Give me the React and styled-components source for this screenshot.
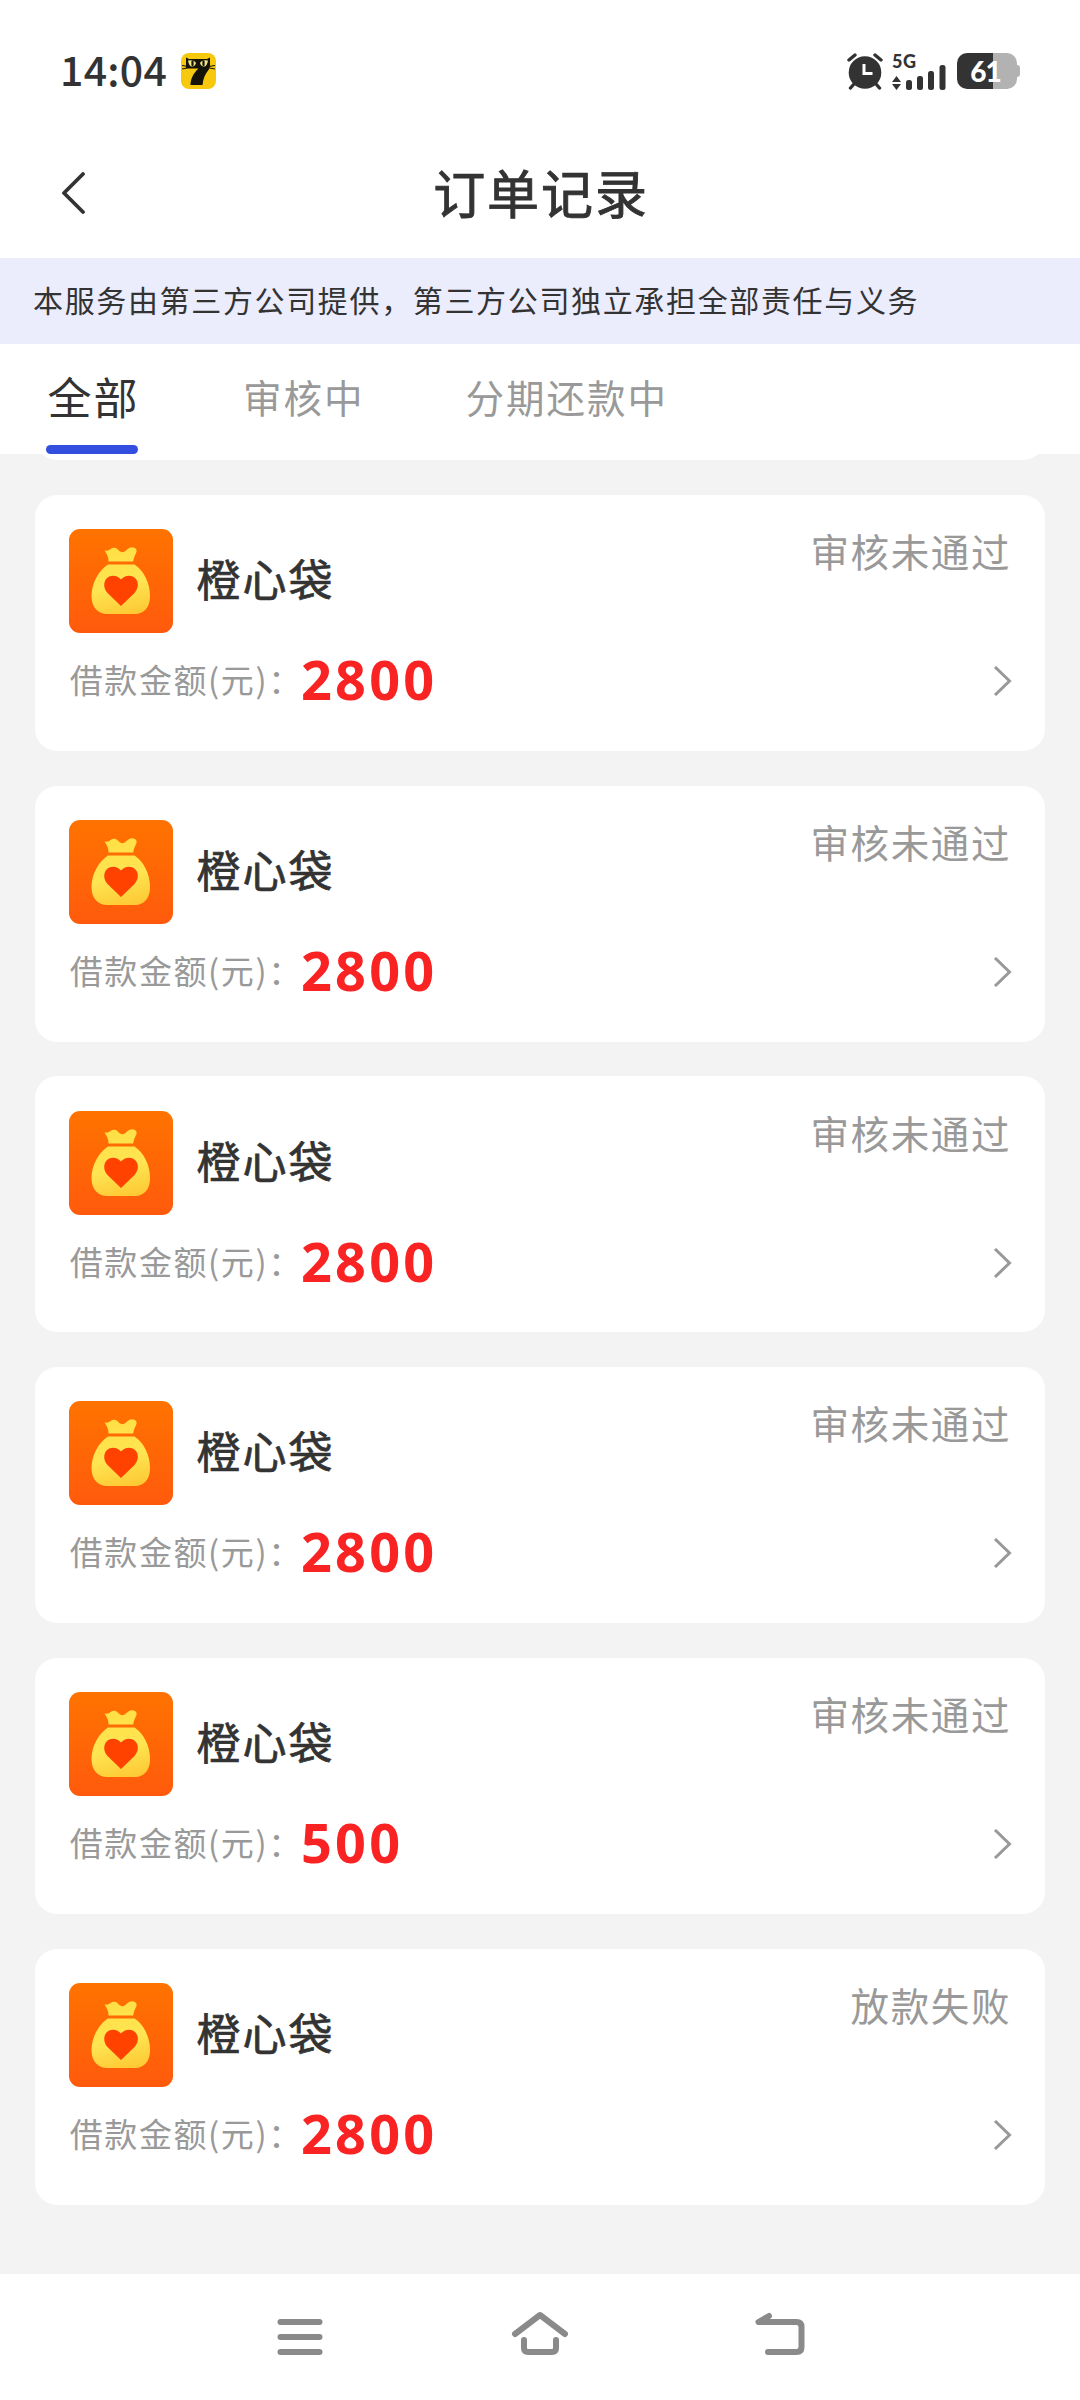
import React from "react";
import styled, { createGlobalStyle } from "styled-components";

const GlobalStyle = createGlobalStyle`
  * { box-sizing: border-box; }
  body {
    margin: 0;
    background: #f3f3f3;
    font-family: "Noto Sans CJK SC", "Noto Sans", sans-serif;
    color: #333;
  }
`;

const Screen = styled.div`
  width: 1080px;
  height: 2400px;
  display: flex;
  flex-direction: column;
  overflow: hidden;
  background: #f3f3f3;
`;

const StatusBar = styled.header`
  height: 140px;
  flex: none;
  display: flex;
  align-items: center;
  justify-content: space-between;
  padding: 2px 60px 0 60px;
  background: #fff;
`;

const StatusGroup = styled.div`
  display: flex;
  align-items: center;
`;

const Clock = styled.span`
  width: 121px;
  font-size: 41px;
  font-weight: 500;
  line-height: 55px;
  padding-bottom: 5px;
  letter-spacing: 0.3px;
`;

const Signal = styled.div`
  width: 54px;
  margin: 0 11px 0 9px;
  display: flex;
  flex-direction: column;
`;

const NetworkLabel = styled.span`
  font-family: Lato, sans-serif;
  font-size: 18px;
  font-weight: 900;
  line-height: 19px;
  height: 13px;
  letter-spacing: 0.6px;
`;

const Battery = styled.div`
  display: flex;
  align-items: center;
`;

const BatteryBody = styled.div`
  width: 60px;
  height: 36px;
  border-radius: 10px;
  background: linear-gradient(90deg, #333 60%, #b2b2b2 60%);
  color: #fff;
  font-family: Lato, sans-serif;
  font-size: 28px;
  font-weight: 900;
  line-height: 36px;
  text-align: center;
  padding-right: 3px;
  letter-spacing: -1px;
`;

const BatteryTip = styled.div`
  width: 3px;
  height: 12px;
  border-radius: 0 3px 3px 0;
  background: #b2b2b2;
`;

const TitleBar = styled.div`
  height: 118px;
  flex: none;
  display: grid;
  grid-template-columns: 120px 1fr 120px;
  align-items: center;
  background: #fff;
`;

const BackButton = styled.button`
  border: 0;
  background: none;
  padding: 0 0 12px 60px;
  height: 118px;
  display: flex;
  align-items: center;
`;

const Title = styled.h1`
  margin: 0;
  padding-bottom: 14px;
  padding-left: 2px;
  text-align: center;
  font-size: 52px;
  font-weight: 400;
  -webkit-text-stroke: 0.9px #333;
  line-height: 76px;
  letter-spacing: 1.9px;
`;

const Notice = styled.div`
  height: 86px;
  flex: none;
  padding-left: 33px;
  background: #ebecfc;
  font-size: 30px;
  line-height: 83px;
  letter-spacing: 1.65px;
`;

const Tabs = styled.nav`
  height: 110px;
  flex: none;
  display: flex;
  padding-left: 46px;
  background: #fff;
`;

const Tab = styled.div`
  display: flex;
  flex-direction: column;
  margin-right: ${(p) => p.$gap}px;
  font-size: ${(p) => (p.$active ? 44 : 38.5)}px;
  letter-spacing: 2px;
  line-height: 105px;
  height: 110px;
  color: ${(p) => (p.$active ? "#333" : "#999")};
  white-space: nowrap;
`;

const TabText = styled.span`
  height: 101px;
  padding-left: ${(p) => (p.$active ? 1.5 : 0)}px;
  margin-right: ${(p) => (p.$active ? -1.5 : 0)}px;
`;

const Underline = styled.span`
  height: 9px;
  border-radius: 5px;
  background: #334fe0;
`;

const List = styled.main`
  flex: 1;
  min-height: 0;
  padding: 0 35px;
  overflow: hidden;
`;

const PreviousCard = styled.div`
  height: 44px;
  margin-top: -38px;
  margin-bottom: 34.8px;
  border-radius: 22px;
  background: #fff;
`;

const Card = styled.article`
  height: 256px;
  margin-bottom: 34.8px;
  border-radius: 22px;
  padding: 34.2px 34px 0 34px;
  background: #fff;
`;

const CardTop = styled.div`
  display: flex;
  height: 104px;
`;

const Name = styled.h2`
  margin: 0 0 0 23.5px;
  flex: 1;
  font-size: 44px;
  font-weight: 400;
  -webkit-text-stroke: 0.7px #333;
  line-height: 99px;
  letter-spacing: 2px;
`;

const Status = styled.span`
  font-size: 38.5px;
  line-height: 42px;
  letter-spacing: 1.6px;
  color: #999;
`;

const CardBottom = styled.div`
  display: flex;
  align-items: center;
  height: 96px;
`;

const Label = styled.span`
  font-size: 33px;
  letter-spacing: 1.6px;
  color: #999;
  white-space: nowrap;
  width: 232px;
  padding-left: 0.7px;
  padding-bottom: 4px;
`;

const Amount = styled.strong`
  flex: 1;
  font-family: "Noto Sans", "Noto Sans CJK SC", sans-serif;
  font-size: 54px;
  font-weight: 700;
  line-height: 93px;
  padding-bottom: 3px;
  letter-spacing: 3.2px;
  color: #fa2323;
`;

const SystemNav = styled.footer`
  height: 126px;
  flex: none;
  display: flex;
  justify-content: center;
  gap: 180px;
  padding-top: 32px;
  background: #fff;
`;

function CatBadge() {
  return (
    <svg width="35" height="36" viewBox="0 0 35 36">
      <rect width="35" height="36" rx="8" fill="#f6c90e" />
      <path d="M5 4.500l3 1.500h18l3-1.500V13q0 2-1.500 4C24 21 22 26 21.500 32H9.500c0-6 3-12 8-16.500H5z" fill="#151208" />
      <path d="M1 12.500l5 .8M1 16l5-1M29 13.300l5-.8M28.500 15l5.500 1" stroke="#151208" strokeWidth="1" />
      <path d="M7 7.500q6-1 8 2.500-1 3.500-4 3.500T7 7.500zM27 7.500q-6-1-8 2.500 1 3.500 4 3.500t4-6z" fill="#eee88a" />
      <path d="M11.500 8.500v3.500M22.500 8.500v3.500" stroke="#151208" strokeWidth="2.200" strokeLinecap="round" />
    </svg>
  );
}

function AlarmIcon() {
  return (
    <svg width="36" height="37" viewBox="0 0 36 37" fill="none" stroke="#333" strokeLinecap="round">
      <circle cx="18" cy="19.5" r="16.3" fill="#333" stroke="none" />
      <path d="M2 7l6-5M34 7l-6-5" strokeWidth="3.4" />
      <path d="M7 31l-3.5 4M29 31l3.5 4" strokeWidth="3.4" />
      <path d="M17 11v9.5h8.5" stroke="#fff" strokeWidth="3" strokeLinecap="butt" />
    </svg>
  );
}

function SignalBars() {
  return (
    <svg width="54" height="25" viewBox="0 0 54 25" fill="#333">
      <path d="M0 17l4.5-6 4.500 6zM0 19h9l-4.500 6z" />
      <rect x="14" y="15" width="6" height="10" rx="2.500" />
      <rect x="25" y="11" width="6" height="14" rx="2.500" />
      <rect x="36" y="6" width="6" height="19" rx="2.500" />
      <rect x="47.500" y="0" width="6" height="25" rx="2.500" />
    </svg>
  );
}

function BackIcon() {
  return (
    <svg width="26" height="42" viewBox="0 0 26 42" fill="none" stroke="#333" strokeWidth="3.8" strokeLinecap="round" strokeLinejoin="round">
      <path d="M23 2L4 21l19 19" />
    </svg>
  );
}

const ChevronSvg = styled.svg`
  flex: none;
  margin-right: -1px;
`;

function ChevronIcon() {
  return (
    <ChevronSvg width="19" height="30" viewBox="0 0 19 30" fill="none" stroke="#999" strokeWidth="3">
      <path d="M2 1l14.500 14L2 29" />
    </ChevronSvg>
  );
}

const LogoSvg = styled.svg`
  flex: none;
  display: block;
`;

function BagLogo({ id }) {
  const square = `square-${id}`;
  const gold = `gold-${id}`;
  return (
    <LogoSvg width="104" height="104" viewBox="0 0 104 104">
      <defs>
        <linearGradient id={square} x1="0" y1="0" x2="0" y2="1">
          <stop offset="0" stopColor="#ff7300" />
          <stop offset="1" stopColor="#ff5a0c" />
        </linearGradient>
        <linearGradient id={gold} gradientUnits="userSpaceOnUse" x1="44" y1="18" x2="60" y2="86">
          <stop offset="0" stopColor="#ffdf45" />
          <stop offset="0.55" stopColor="#ffe552" />
          <stop offset="1" stopColor="#fdc934" />
        </linearGradient>
      </defs>
      <rect width="104" height="104" rx="11" fill={`url(#${square})`} />
      <path
        d="M35.500 21.500c2.500 .5 4.300-.2 6-1.500 2.500-1.800 5.500-1.500 7.500 .8 2.800 3.200 6 3.200 8.800 0 2.400-2.800 6-3.300 8.500-1.500 1.600 1.300 1.700 3 .7 5-1.500 2.800-2.300 4.800-2.800 8.200H39.500c.3-4-1.500-7-4-11z"
        fill={`url(#${gold})`}
      />
      <path
        d="M39 35.500h26.500C74.500 41 81 54 81 67c0 11.500-6 18-15 18H38c-9 0-15.500-6.500-15.500-18 0-13 7.500-26 16.500-31.500z"
        fill={`url(#${gold})`}
      />
      <path
        d="M52 77L38.500 64c-4.500-5-4-11.500-.5-15 4-3.500 10.500-3 14 1.500 3.500-4.500 10-5 14-1.500 3.800 3.500 4 10-.5 15z"
        fill="#ff4200"
      />
    </LogoSvg>
  );
}

const NavIcon = styled.svg`
  width: 60px;
  height: 60px;
  fill: none;
  stroke: #8a8a8a;
  stroke-width: 6px;
  stroke-linecap: round;
  stroke-linejoin: round;
`;

const orders = [
  { amount: "2800", status: "审核未通过" },
  { amount: "2800", status: "审核未通过" },
  { amount: "2800", status: "审核未通过" },
  { amount: "2800", status: "审核未通过" },
  { amount: "500", status: "审核未通过" },
  { amount: "2800", status: "放款失败" },
];

function OrderCard({ id, amount, status }) {
  return (
    <Card>
      <CardTop>
        <BagLogo id={id} />
        <Name>橙心袋</Name>
        <Status>{status}</Status>
      </CardTop>
      <CardBottom>
        <Label>借款金额(元)：</Label>
        <Amount>{amount}</Amount>
        <ChevronIcon />
      </CardBottom>
    </Card>
  );
}

export default function App() {
  return (
    <Screen>
      <GlobalStyle />
      <StatusBar>
        <StatusGroup>
          <Clock>14:04</Clock>
          <CatBadge />
        </StatusGroup>
        <StatusGroup>
          <AlarmIcon />
          <Signal>
            <NetworkLabel>5G</NetworkLabel>
            <SignalBars />
          </Signal>
          <Battery>
            <BatteryBody>61</BatteryBody>
            <BatteryTip />
          </Battery>
        </StatusGroup>
      </StatusBar>
      <TitleBar>
        <BackButton aria-label="返回">
          <BackIcon />
        </BackButton>
        <Title>订单记录</Title>
      </TitleBar>
      <Notice>本服务由第三方公司提供，第三方公司独立承担全部责任与义务</Notice>
      <Tabs>
        <Tab $active $gap={105}>
          <TabText $active>全部</TabText>
          <Underline />
        </Tab>
        <Tab $gap={101}>
          <TabText>审核中</TabText>
        </Tab>
        <Tab $gap={0}>
          <TabText>分期还款中</TabText>
        </Tab>
      </Tabs>
      <List>
        <PreviousCard />
        {orders.map((o, i) => (
          <OrderCard key={i} id={i} {...o} />
        ))}
      </List>
      <SystemNav>
        <NavIcon viewBox="0 0 60 60">
          <path d="M10.500 31h39M10.500 46h39M10.500 16h39" />
        </NavIcon>
        <NavIcon viewBox="0 0 60 60">
          <path d="M5 28L30 9l25 19M14 34v8q0 4 4 4h24q4 0 4-4v-8" />
        </NavIcon>
        <NavIcon viewBox="0 0 60 60">
          <path d="M19 10L8.500 16h38q5 0 5 5v20q0 5-5 5H18" />
        </NavIcon>
      </SystemNav>
    </Screen>
  );
}
